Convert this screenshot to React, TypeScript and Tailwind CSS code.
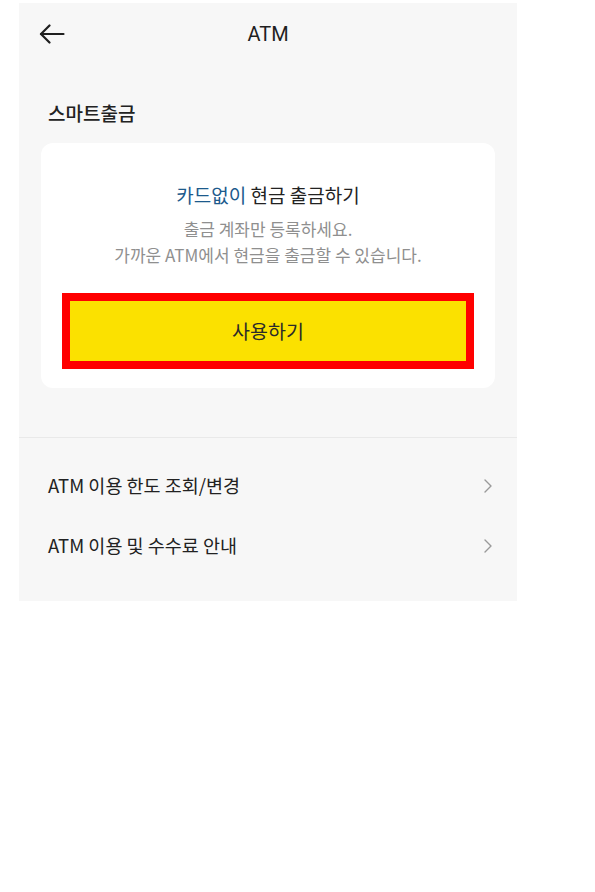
const font = { fontFamily: '"Noto Sans CJK KR", "Noto Sans", sans-serif' };

function BackArrow() {
  return (
    <svg width="26" height="20" viewBox="0 0 26 20" fill="none" stroke="#1f1f1f" strokeWidth="2.2" strokeLinecap="round" strokeLinejoin="round">
      <path d="M24.5 10H2" />
      <path d="M10.5 1.5L2 10l8.5 8.5" />
    </svg>
  );
}

function Chevron() {
  return (
    <svg width="10" height="16" viewBox="0 0 10 16" fill="none" stroke="#9a9a9a" strokeWidth="1.4" strokeLinecap="round" strokeLinejoin="round">
      <path d="M2 2l6 6-6 6" />
    </svg>
  );
}

const menuItems = ['ATM 이용 한도 조회/변경', 'ATM 이용 및 수수료 안내'];

export default function App() {
  return (
    <div className="min-h-[892px] w-[595px] bg-white" style={font}>
      <div className="ml-[19px] pt-[3px]">
        <div className="w-[498px] bg-[#f7f7f7] pb-[25px]">
          {/* Header */}
          <div className="relative flex h-[62px] items-center justify-center">
            <button className="absolute left-[20px] top-[21px]">
              <BackArrow />
            </button>
            <h1 className="text-[20px] leading-none text-[#1f1f1f]" style={{ fontFamily: 'Roboto, "Noto Sans CJK KR", sans-serif' }}>
              ATM
            </h1>
          </div>

          {/* Smart withdrawal */}
          <div className="px-[29px] pt-[35px]">
            <h2 className="text-[19px] leading-[26px] font-medium text-[#222]">스마트출금</h2>
          </div>

          <div className="mx-[22px] mt-[17px] rounded-[12px] bg-white px-[21px] pt-[39px] pb-[19px] text-center">
            <p className="text-[19px] leading-[26px] text-[#222]">
              <span className="text-[#1c5a8c]">카드없이</span> 현금 출금하기
            </p>
            <p className="mt-[8px] text-[17px] leading-[26px] text-[#8f8f8f]">
              출금 계좌만 등록하세요.
              <br />
              가까운 ATM에서 현금을 출금할 수 있습니다.
            </p>
            <button className="mt-[25px] flex h-[76px] w-full items-center justify-center border-[8px] border-[#ff0000] bg-[#fbe100] text-[19.5px] text-[#2a2a2a]">
              사용하기
            </button>
          </div>

          <div className="mt-[49px] h-px bg-[#e9e9e9]" />

          <ul className="pt-[18px]">
            {menuItems.map((item) => (
              <li key={item} className="flex h-[60px] items-center justify-between pl-[29px] pr-[24px]">
                <span className="text-[18.5px] text-[#222]">{item}</span>
                <Chevron />
              </li>
            ))}
          </ul>
        </div>
      </div>
    </div>
  );
}
